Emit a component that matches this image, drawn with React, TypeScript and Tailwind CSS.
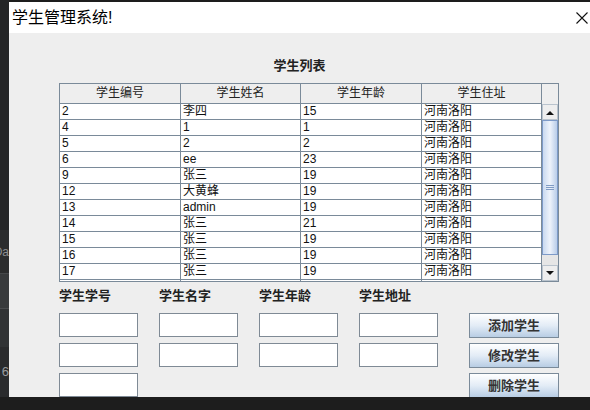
import React from "react";

type Student = { id: string; name: string; age: string; addr: string };

const students: Student[] = [
  { id: "2", name: "李四", age: "15", addr: "河南洛阳" },
  { id: "4", name: "1", age: "1", addr: "河南洛阳" },
  { id: "5", name: "2", age: "2", addr: "河南洛阳" },
  { id: "6", name: "ee", age: "23", addr: "河南洛阳" },
  { id: "9", name: "张三", age: "19", addr: "河南洛阳" },
  { id: "12", name: "大黄蜂", age: "19", addr: "河南洛阳" },
  { id: "13", name: "admin", age: "19", addr: "河南洛阳" },
  { id: "14", name: "张三", age: "21", addr: "河南洛阳" },
  { id: "15", name: "张三", age: "19", addr: "河南洛阳" },
  { id: "16", name: "张三", age: "19", addr: "河南洛阳" },
  { id: "17", name: "张三", age: "19", addr: "河南洛阳" },
];

const headers = ["学生编号", "学生姓名", "学生年龄", "学生住址"];
const colW = ["w-[121px]", "w-[120px]", "w-[121px]", "w-[120px]"];

function ArrowUp() {
  return (
    <svg width="8" height="5" viewBox="0 0 8 5">
      <path d="M0 5 L4 1 L8 5 Z" fill="#111" />
    </svg>
  );
}

function ArrowDown() {
  return (
    <svg width="8" height="5" viewBox="0 0 8 5">
      <path d="M0 0 L8 0 L4 4 Z" fill="#111" />
    </svg>
  );
}

function ScrollBar() {
  return (
    <div className="w-[16px] flex flex-col">
      <div className="h-[20px] bg-[#eeeeee]" />
      <div className="h-[16px] bg-[#eeeeee] border border-[#b9c3cd] flex items-center justify-center">
        <ArrowUp />
      </div>
      <div className="h-[135px] border border-[#7d9ac8] bg-gradient-to-r from-[#c9d9f0] via-[#eef3fb] to-[#b9cde9] flex flex-col items-center justify-center gap-[1px]">
        <div className="w-[8px] h-[1px] bg-[#7f9bc4]" />
        <div className="w-[8px] h-[1px] bg-[#7f9bc4]" />
        <div className="w-[8px] h-[1px] bg-[#7f9bc4]" />
      </div>
      <div className="h-[10px] bg-[#e6e6e6]" />
      <div className="h-[16px] bg-[#eeeeee] border border-[#b9c3cd] flex items-center justify-center">
        <ArrowDown />
      </div>
    </div>
  );
}

function StudentTable() {
  return (
    <div className="w-[500px] h-[199px] border border-[#7a8a99] flex bg-[#eeeeee] overflow-hidden">
      <div className="w-[482px] flex flex-col">
        <div className="h-[20px] flex border-b border-[#7a8a99] bg-[#eeeeee]">
          {headers.map((h, i) => (
            <div
              key={h}
              className={`${colW[i]} border-r border-[#7a8a99] text-[12px] leading-[19px] text-center text-[#222]`}
            >
              {h}
            </div>
          ))}
        </div>
        <div className="h-[177px] overflow-hidden bg-white">
          {students.map((s) => (
            <div key={s.id} className="h-[16px] flex border-b border-[#7a8a99]">
              {[s.id, s.name, s.age, s.addr].map((v, i) => (
                <div
                  key={i}
                  className={`${colW[i]} border-r border-[#7a8a99] pl-[2px] text-[12px] leading-[15px] text-[#111] overflow-hidden whitespace-nowrap`}
                >
                  {v}
                </div>
              ))}
            </div>
          ))}
          <div className="h-[1px] flex">
            {colW.map((w, i) => (
              <div key={i} className={`${w} border-r border-[#7a8a99]`} />
            ))}
          </div>
        </div>
      </div>
      <ScrollBar />
    </div>
  );
}

function Field() {
  return <div className="h-[24px] bg-white border border-[#7f8a95]" />;
}

function OceanButton({ label }: { label: string }) {
  return (
    <div className="w-[90px] h-[25px] border border-[#7a8a99] bg-gradient-to-b from-[#ffffff] via-[#e3ecf6] to-[#b8cde4] flex items-center justify-center text-[13px] font-bold text-[#333]">
      {label}
    </div>
  );
}

function DesktopStrip() {
  return (
    <div className="w-[9px] h-[397px] flex flex-col overflow-hidden">
      <div className="h-[230px] bg-[#242526]" />
      <div className="h-[43px] bg-[#2b2c2d] flex items-center justify-end overflow-hidden">
        <span className="text-[12px] text-[#8d8f91] whitespace-nowrap">Da</span>
      </div>
      <div className="h-[1px] bg-[#46484a]" />
      <div className="h-[34px] bg-[#383a3c]" />
      <div className="h-[1px] bg-[#4a4c4e]" />
      <div className="h-[38px] bg-[#313335]" />
      <div className="flex-1 bg-[#2a2b2d] flex items-center justify-end overflow-hidden">
        <span className="text-[13px] text-[#9a9c9e] whitespace-nowrap">6</span>
      </div>
    </div>
  );
}

export default function App() {
  return (
    <div className="w-[590px] h-[410px] bg-[#1d1d1d] overflow-hidden font-['Liberation_Sans','Noto_Sans_CJK_SC',sans-serif]">
      <div className="flex h-[397px]">
        <DesktopStrip />
        <div className="w-[581px] mt-[2px] flex flex-col">
          <div className="h-[31px] bg-white flex items-center justify-between pl-[3px] pr-[2px]">
            <span className="text-[16px] text-black">学生管理系统!</span>
            <svg width="12" height="12" viewBox="0 0 12 12">
              <path d="M0.5 0.5 L11.5 11.5 M11.5 0.5 L0.5 11.5" stroke="#111" strokeWidth="1.1" />
            </svg>
          </div>
          <div className="flex-1 bg-[#eeeeee] flex flex-col overflow-hidden">
            <div className="mt-[25px] h-[16px] leading-[16px] text-center text-[13px] font-bold text-[#222]">
              学生列表
            </div>
            <div className="mt-[9px] ml-[50px]">
              <StudentTable />
            </div>
            <div className="ml-[50px] mt-[6px]">
              <div className="grid grid-cols-[repeat(4,79px)] gap-x-[21px] h-[16px] leading-[16px] text-[13px] font-bold text-[#222]">
                <span>学生学号</span>
                <span>学生名字</span>
                <span>学生年龄</span>
                <span>学生地址</span>
              </div>
              <div className="flex mt-[9px]">
                <div className="grid grid-cols-[repeat(4,79px)] gap-x-[21px] gap-y-[6px] auto-rows-[24px]">
                  <Field />
                  <Field />
                  <Field />
                  <Field />
                  <Field />
                  <Field />
                  <Field />
                  <Field />
                  <Field />
                </div>
                <div className="ml-[31px] flex flex-col gap-[5px]">
                  <OceanButton label="添加学生" />
                  <OceanButton label="修改学生" />
                  <OceanButton label="删除学生" />
                </div>
              </div>
            </div>
          </div>
        </div>
      </div>
    </div>
  );
}
